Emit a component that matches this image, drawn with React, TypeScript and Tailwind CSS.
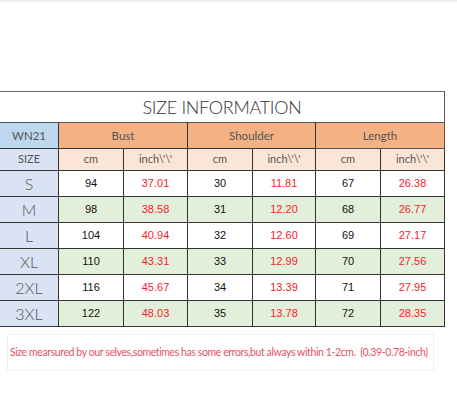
import React from "react";

const rows = [
  { s: "S", v: ["94", "37.01", "30", "11.81", "67", "26.38"], g: false },
  { s: "M", v: ["98", "38.58", "31", "12.20", "68", "26.77"], g: true },
  { s: "L", v: ["104", "40.94", "32", "12.60", "69", "27.17"], g: false },
  { s: "XL", v: ["110", "43.31", "33", "12.99", "70", "27.56"], g: true },
  { s: "2XL", v: ["116", "45.67", "34", "13.39", "71", "27.95"], g: false },
  { s: "3XL", v: ["122", "48.03", "35", "13.78", "72", "28.35"], g: true },
];

const widths = ["w-[65px]", "w-[64px]", "w-[65px]", "w-[63px]", "w-[65px]", "w-[64px]"];

export default function App() {
  const cal = { fontFamily: "Lato, 'Open Sans', sans-serif" };
  const ar = { fontFamily: "'Liberation Sans', Arial, sans-serif" };
  return (
    <div className="w-[457px] h-[408px] bg-white relative overflow-hidden">
      <div className="h-[2px] w-full bg-[#ececec]" />
      <div className="h-[89px]" />
      <div className="w-[445px] border-t border-[#666] box-border">
        <div
          className="h-[31px] flex items-center justify-center border-r border-b border-[#555] text-[18px] tracking-[-0.3px] font-light text-[#333] pt-[1px]"
          style={cal}
        >
          SIZE INFORMATION
        </div>
        <div className="flex h-[26px] text-[11.5px] text-[#555]" style={cal}>
          <div className="w-[59px] bg-[#bdd7ee] border-r border-b border-[#333] flex items-center justify-center">WN21</div>
          <div className="w-[129px] bg-[#f4b183] border-r border-b border-[#333] flex items-center justify-center">Bust</div>
          <div className="w-[128px] bg-[#f4b183] border-r border-b border-[#333] flex items-center justify-center">Shoulder</div>
          <div className="w-[129px] bg-[#f4b183] border-r border-b border-[#555] flex items-center justify-center">Length</div>
        </div>
        <div className="flex h-[22px] text-[11px] text-[#555]" style={cal}>
          <div className="w-[59px] bg-[#dae3f3] border-r border-b border-[#333] flex items-center justify-center">SIZE</div>
          {widths.map((w, i) => (
            <div key={i} className={`${w} bg-[#fbe5d6] border-r border-b border-[#333] flex items-center justify-center`}>
              {i % 2 === 0 ? "cm" : "inch\\'\\'"}
            </div>
          ))}
        </div>
        {rows.map((r) => (
          <div key={r.s} className="flex h-[26px]">
            <div
              className="w-[59px] bg-[#dae3f3] border-r border-b border-[#333] flex items-center justify-center text-[16px] font-light text-[#555]"
              style={cal}
            >
              {r.s}
            </div>
            {r.v.map((v, i) => (
              <div
                key={i}
                className={`${widths[i]} ${r.g ? "bg-[#e2efda]" : "bg-white"} border-r border-b border-[#333] flex items-center justify-center text-[11px] ${i % 2 === 1 ? "text-[#f5222d]" : "text-[#111]"}`}
                style={ar}
              >
                {v}
              </div>
            ))}
          </div>
        ))}
      </div>
      <div className="mt-[7px] ml-[7px] w-[427px] h-[37px] border border-[#f0f0f0] flex items-center">
        <span className="ml-[2px] text-[10.5px] tracking-[-0.4px] text-[#e8506a] whitespace-nowrap" style={cal}>
          Size mearsured by our selves,sometimes has some errors,but always within 1-2cm.&nbsp;&nbsp;(0.39-0.78-inch)
        </span>
      </div>
    </div>
  );
}
